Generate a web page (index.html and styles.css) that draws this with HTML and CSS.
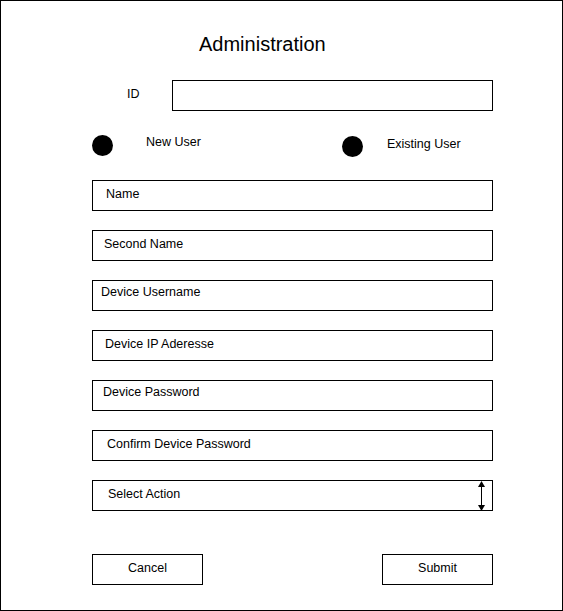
FILE: index.html
```html
<!DOCTYPE html>
<html lang="en">
<head>
<meta charset="utf-8">
<title>Administration</title>
<link rel="stylesheet" href="styles.css">
</head>
<body>
<div class="frame">
  <h1 class="title">Administration</h1>
  <div class="id-row">
    <span class="id-label">ID</span>
    <div class="box id-box"></div>
  </div>
  <div class="radio-row">
    <div class="radio radio-new"><span class="dot"></span><span class="radio-label">New User</span></div>
    <div class="radio radio-existing"><span class="dot"></span><span class="radio-label">Existing User</span></div>
  </div>
  <div class="fields">
    <div class="box field f-name">Name</div>
    <div class="box field f-second">Second Name</div>
    <div class="box field f-username">Device Username</div>
    <div class="box field f-ip">Device IP Aderesse</div>
    <div class="box field f-password">Device Password</div>
    <div class="box field f-confirm">Confirm Device Password</div>
    <div class="box field f-select">Select Action
      <svg class="updown" width="9" height="30" viewBox="0 0 9 30">
        <line x1="4.5" y1="4" x2="4.5" y2="26" stroke="#000" stroke-width="1"/>
        <polygon points="4.5,0 8,6 1,6" fill="#000"/>
        <polygon points="4.5,30 8,24 1,24" fill="#000"/>
      </svg>
    </div>
  </div>
  <div class="actions">
    <div class="box btn">Cancel</div>
    <div class="box btn">Submit</div>
  </div>
</div>
</body>
</html>
```

FILE: styles.css
```css
html, body {
  margin: 0;
  padding: 0;
  background: #fff;
}

.frame {
  box-sizing: border-box;
  width: 563px;
  height: 611px;
  border: 1px solid #000;
  padding-left: 91px;
  font-family: "Liberation Sans", Arial, sans-serif;
  font-size: 12.5px;
  color: #000;
  display: flex;
  flex-direction: column;
}

.title {
  margin: 31px 0 0 0;
  padding-left: 107px;
  font-size: 20px;
  line-height: 24px;
  font-weight: normal;
}

.box {
  box-sizing: border-box;
  border: 1px solid #000;
  background: #fff;
}

.id-row {
  margin-top: 24px;
  display: flex;
  align-items: center;
}

.id-label {
  width: 80px;
  padding-left: 35px;
  box-sizing: border-box;
  margin-top: -4px;
}

.id-box {
  width: 321px;
  height: 31px;
}

.radio-row {
  margin-top: 22px;
  display: flex;
  height: 24px;
}

.radio {
  display: flex;
  align-items: center;
}

.radio-new {
  width: 250px;
}

.radio-existing {
  margin-top: 2px;
}

.dot {
  width: 21px;
  height: 21px;
  border-radius: 50%;
  background: #000;
  flex: none;
}

.radio-new .radio-label {
  margin-left: 33px;
  margin-top: -6px;
}

.radio-existing .radio-label {
  margin-left: 24px;
  margin-top: -4px;
}

.fields {
  margin-top: 23px;
  display: flex;
  flex-direction: column;
  gap: 19px;
}

.field {
  width: 401px;
  height: 31px;
  display: flex;
  align-items: center;
  padding-bottom: 4px;
  position: relative;
}

.f-name { padding-left: 13px; }
.f-second { padding-left: 11px; }
.f-username { padding-left: 8px; padding-bottom: 8px; }
.f-ip { padding-left: 12px; }
.f-password { padding-left: 10px; padding-bottom: 8px; }
.f-confirm { padding-left: 14px; }
.f-select { padding-left: 15px; }

.updown {
  position: absolute;
  right: 6px;
  top: 0;
}

.actions {
  margin-top: 43px;
  display: flex;
  justify-content: space-between;
  width: 401px;
}

.btn {
  width: 111px;
  height: 31px;
  display: flex;
  align-items: center;
  justify-content: center;
  padding-bottom: 4px;
}
```
